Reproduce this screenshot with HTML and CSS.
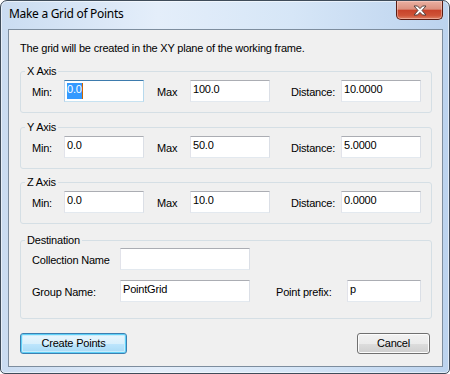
FILE: index.html
```html
<!DOCTYPE html>
<html>
  <head>
    <meta charset="utf-8">
    <link rel="stylesheet" href="styles.css">
    <title>Make a Grid of Points</title>
  </head>
  <body>
    <div class="window">
      <div class="titlebar">
        <span class="title">Make a Grid of Points</span>
        <div class="close">
          <svg width="14" height="11" viewBox="0 0 14 11">
            <polygon points="1,1 4.5,1 7,3.6 9.5,1 13,1 9,5.5 13,10 9.5,10 7,7.4 4.5,10 1,10 5,5.5"
                     fill="#fff" stroke="#55403c" stroke-width="1" stroke-linejoin="round"/>
          </svg>
        </div>
      </div>

      <div class="client">
        <p class="intro">The grid will be created in the XY plane of the working frame.</p>

        <fieldset class="group first">
          <legend>X Axis</legend>
          <div class="axis-row">
            <span class="lbl lbl-min">Min:</span>
            <div class="textbox focused"><span class="sel">0.0</span><span class="caret"></span></div>
            <span class="lbl lbl-max">Max</span>
            <div class="textbox">100.0</div>
            <span class="lbl lbl-dist">Distance:</span>
            <div class="textbox">10.0000</div>
          </div>
        </fieldset>

        <fieldset class="group second">
          <legend>Y Axis</legend>
          <div class="axis-row">
            <span class="lbl lbl-min">Min:</span>
            <div class="textbox">0.0</div>
            <span class="lbl lbl-max">Max</span>
            <div class="textbox">50.0</div>
            <span class="lbl lbl-dist">Distance:</span>
            <div class="textbox">5.0000</div>
          </div>
        </fieldset>

        <fieldset class="group">
          <legend>Z Axis</legend>
          <div class="axis-row">
            <span class="lbl lbl-min">Min:</span>
            <div class="textbox">0.0</div>
            <span class="lbl lbl-max">Max</span>
            <div class="textbox">10.0</div>
            <span class="lbl lbl-dist">Distance:</span>
            <div class="textbox">0.0000</div>
          </div>
        </fieldset>

        <fieldset class="group dest">
          <legend>Destination</legend>
          <div class="dest-row">
            <span class="lbl lbl-name">Collection Name</span>
            <div class="textbox wide"></div>
          </div>
          <div class="dest-row">
            <span class="lbl lbl-name">Group Name:</span>
            <div class="textbox wide">PointGrid</div>
            <span class="lbl lbl-prefix">Point prefix:</span>
            <div class="textbox short">p</div>
          </div>
        </fieldset>

        <div class="buttons">
          <div class="btn default">Create Points</div>
          <div class="btn cancel">Cancel</div>
        </div>
      </div>
    </div>
  </body>
</html>
```

FILE: styles.css
```css
* {
  box-sizing: border-box;
}
body {
  margin: 0;
  background-color: #fff;
  font-family: "Liberation Sans", Arial, sans-serif;
  font-size: 11px;
  line-height: 13px;
  letter-spacing: -0.2px;
  color: #000;
}
.window {
  width: 450px;
  height: 374px;
  padding: 0 6px 6px 7px;
  border: 1px solid #3f4c5a;
  border-radius: 7px 7px 5px 5px;
  background-image: linear-gradient(to right, #cadcf1, #e4eefa 35%, #d6e6f7 65%, #bcd3ee);
  box-shadow: inset 0 0 0 1px rgba(255, 255, 255, .55);
}
.titlebar {
  height: 28px;
  display: flex;
  justify-content: space-between;
  align-items: flex-start;
}
.title {
  padding: 5px 0 0 1px;
  font-family: "Noto Sans", "Liberation Sans", sans-serif;
  font-size: 12px;
  line-height: 16px;
  letter-spacing: -0.3px;
}
.close {
  width: 47px;
  height: 19px;
  display: flex;
  justify-content: center;
  align-items: center;
  border: 1px solid #5a1c12;
  border-top: 0;
  border-radius: 0 0 5px 5px;
  background-image: linear-gradient(#eab0a2 0%, #dc917f 45%, #c8432a 52%, #cf5337 80%, #de8265 100%);
  box-shadow: inset 0 0 0 1px rgba(255, 220, 210, .45);
}
.client {
  height: 338px;
  padding: 0 10px 0 11px;
  border: 1px solid #7d8d9e;
  background-color: #f0f0f0;
}
.intro {
  margin: 12px 0 0 0;
}
.group {
  margin: 7px 0 0 0;
  padding: 2px 0 10px 11px;
  border: 1px solid #d5dfe5;
  border-radius: 3px;
}
.group.first {
  margin-top: 10px;
}
.group.second {
  margin-top: 8px;
}
.group.dest {
  margin-top: 10px;
  padding-top: 1px;
  padding-bottom: 16px;
}
legend {
  margin-left: -7px;
  padding: 0 2px;
}
.axis-row,
.dest-row {
  display: flex;
  align-items: flex-start;
}
.dest-row + .dest-row {
  margin-top: 10px;
}
.lbl {
  padding-top: 6px;
}
.lbl-min {
  width: 32px;
}
.lbl-max {
  width: 33px;
  margin-left: 13px;
}
.lbl-dist {
  width: 50px;
  margin-left: 21px;
}
.lbl-name {
  width: 88px;
}
.lbl-prefix {
  width: 71px;
  margin-left: 26px;
}
.textbox {
  width: 80px;
  height: 22px;
  padding: 2px;
  display: flex;
  border: 1px solid;
  border-color: #abadb3 #dbdfe6 #e3e9ef #e2e3ea;
  background-color: #fff;
}
.textbox.wide {
  width: 130px;
}
.textbox.short {
  width: 74px;
}
.textbox.focused {
  border-color: #3d7bad #b7d9ed #c7e2f1 #b5cfe7;
}
.sel {
  background-color: #3399ff;
  color: #fff;
}
.caret {
  width: 1px;
  background-color: #cc6600;
}
.buttons {
  margin-top: 14px;
  padding-right: 2px;
  display: flex;
  justify-content: space-between;
}
.btn {
  height: 21px;
  display: flex;
  justify-content: center;
  align-items: center;
  border: 1px solid #707070;
  border-radius: 3px;
  background-image: linear-gradient(#f2f2f2 0%, #ebebeb 50%, #dddddd 51%, #cfcfcf 100%);
  box-shadow: inset 0 0 0 1px #fcfcfc;
}
.btn.default {
  width: 107px;
  border-color: #3c7fb1;
  background-image: linear-gradient(#eaf6fd 0%, #d9f0fc 50%, #bee6fd 51%, #a7d9f5 100%);
  box-shadow: inset 0 0 0 1px #5fd0f7, inset 0 0 0 2px #c8ecfc;
}
.btn.cancel {
  width: 73px;
}
```
